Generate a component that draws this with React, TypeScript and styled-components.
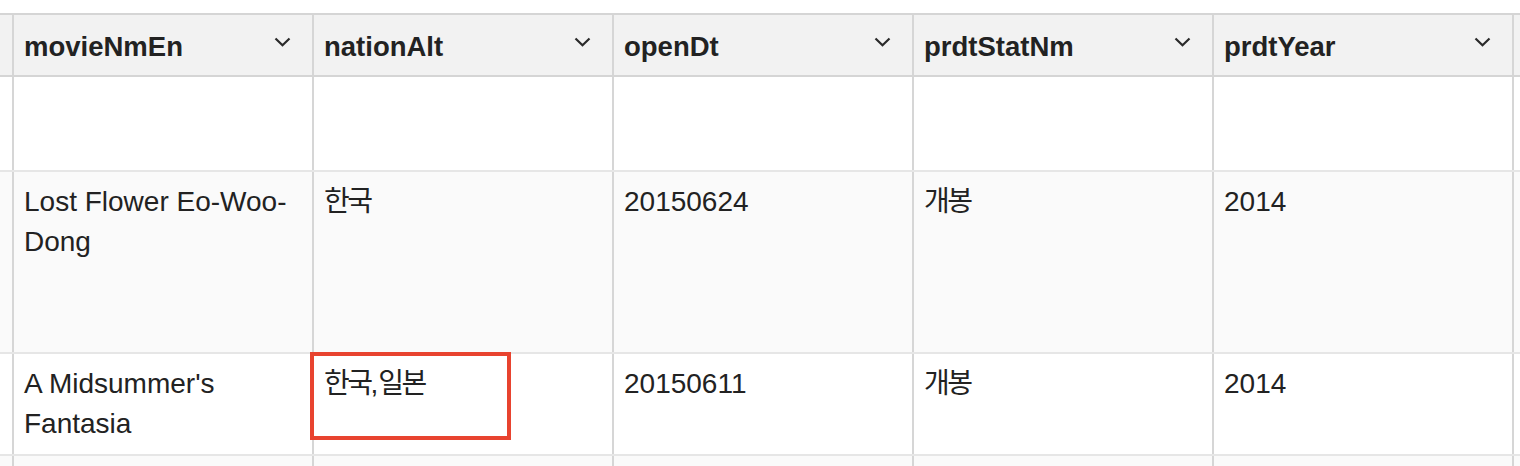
import React from "react";
import styled, { createGlobalStyle } from "styled-components";

const Global = createGlobalStyle`
  *, *::before, *::after { box-sizing: border-box; }
  html, body { margin: 0; padding: 0; background: #ffffff; }
  body { font-family: "Liberation Sans", "Noto Sans CJK KR", Arial, sans-serif; color: #222222; }
`;

const Page = styled.div`
  width: 1520px;
  height: 466px;
  overflow: hidden;
  padding-top: 13px;
`;

const Grid = styled.div`
  border-top: 2px solid #d5d5d5;
`;

const Row = styled.div<{ $h: number; $head?: boolean; $alt?: boolean }>`
  display: grid;
  grid-template-columns: 14px repeat(5, 300px) 1fr;
  height: ${(p) => p.$h + 2}px;
  background: ${(p) => (p.$head ? "#f2f2f2" : p.$alt ? "#fafafa" : "#ffffff")};
  border-bottom: 2px solid ${(p) => (p.$head ? "#d5d5d5" : "#e6e6e6")};
`;

const Cell = styled.div`
  position: relative;
  min-width: 0;
  border-right: 2px solid #d6d6d6;
  padding: 10px 14px 0 10px;
  font-size: 28px;
  line-height: 40px;
  color: #222222;
  &:last-child { border-right: none; }
`;

const EdgeCell = styled.div`
  min-width: 0;
  border-right: 2px solid #d6d6d6;
  &:last-child { border-right: none; }
`;

const HeadCell = styled.div`
  display: flex;
  align-items: center;
  justify-content: space-between;
  min-width: 0;
  border-right: 2px solid #d6d6d6;
  padding: 0 21px 0 10px;
  font-size: 27.5px;
  font-weight: 700;
  color: #222222;
`;

const Label = styled.span`
  line-height: 40px;
  padding-top: 3px;
`;

const Chevron = styled.svg`
  width: 17px;
  height: 10px;
  margin-bottom: 6px;
  flex: none;
`;

const Hangul = styled.span`
  letter-spacing: -2.5px;
`;

const Mark = styled.div`
  position: absolute;
  left: -4px;
  top: -2px;
  width: 201px;
  height: 88px;
  border: 4px solid #e8432f;
  pointer-events: none;
`;

const Arrow = () => (
  <Chevron viewBox="0 0 17 10">
    <polyline points="1.5,1.5 8.5,8.2 15.5,1.5" fill="none" stroke="#2a2a2a" strokeWidth="2.2" />
  </Chevron>
);

const headers = ["movieNmEn", "nationAlt", "openDt", "prdtStatNm", "prdtYear"];

type Rec = { en: string; nation: string; open: string; stat: string; year: string; mark?: boolean };

const rows: { h: number; rec?: Rec }[] = [
  { h: 93 },
  { h: 180, rec: { en: "Lost Flower Eo-Woo-Dong", nation: "한국", open: "20150624", stat: "개봉", year: "2014" } },
  { h: 100, rec: { en: "A Midsummer's Fantasia", nation: "한국,일본", open: "20150611", stat: "개봉", year: "2014", mark: true } },
  { h: 60 },
];

const K = ({ t }: { t: string }) => (
  <>
    {t.split(/([,])/).map((part, i) =>
      part === "," ? <span key={i}>,</span> : <Hangul key={i}>{part}</Hangul>
    )}
  </>
);

export default function App() {
  return (
    <Page>
      <Global />
      <Grid>
        <Row $h={60} $head>
          <EdgeCell />
          {headers.map((h) => (
            <HeadCell key={h}>
              <Label>{h}</Label>
              <Arrow />
            </HeadCell>
          ))}
          <EdgeCell />
        </Row>
        {rows.map((r, i) => (
          <Row key={i} $h={r.h} $alt={i % 2 === 1}>
            <EdgeCell />
            <Cell>{r.rec?.en}</Cell>
            <Cell>
              {r.rec && <K t={r.rec.nation} />}
              {r.rec?.mark && <Mark />}
            </Cell>
            <Cell>{r.rec?.open}</Cell>
            <Cell>{r.rec && <K t={r.rec.stat} />}</Cell>
            <Cell>{r.rec?.year}</Cell>
            <EdgeCell />
          </Row>
        ))}
      </Grid>
    </Page>
  );
}
